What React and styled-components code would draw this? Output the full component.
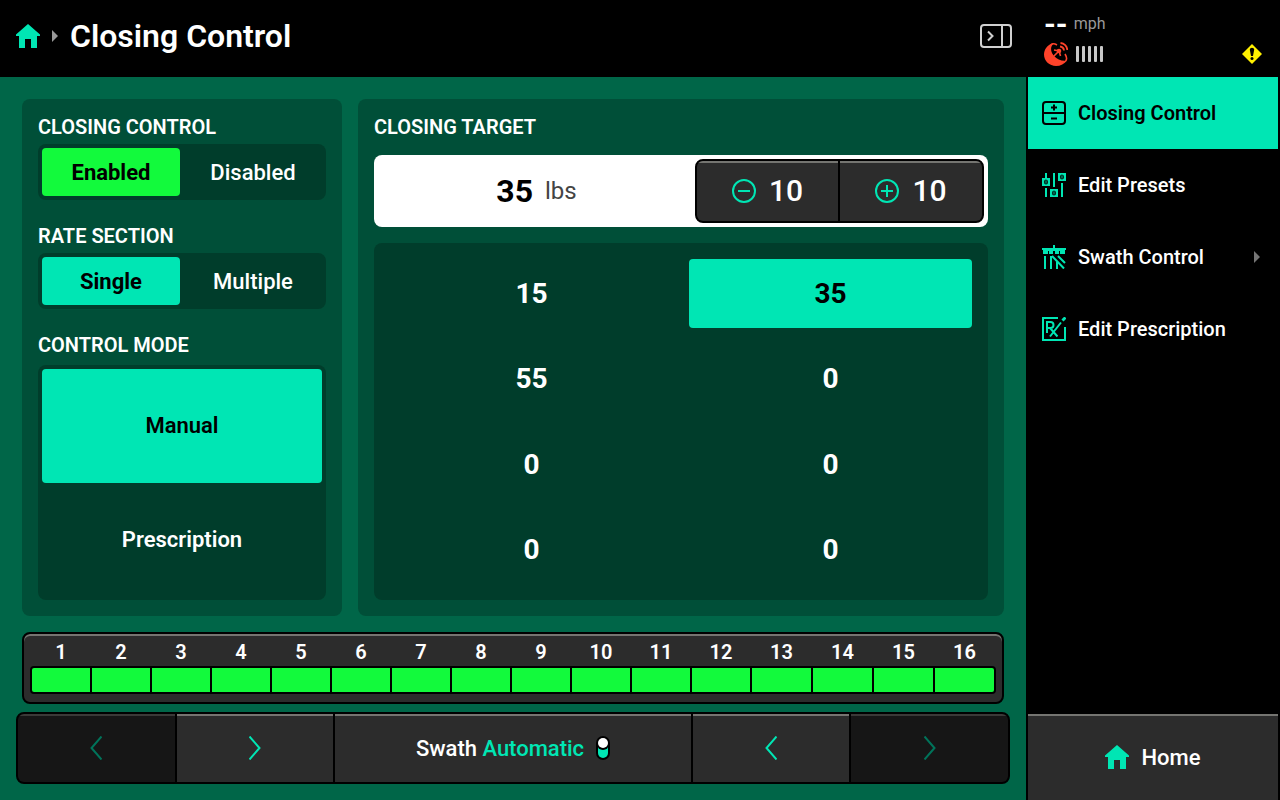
import { useState } from 'react'
import styled, { createGlobalStyle, css } from 'styled-components'

const teal = '#00e6b4'
const lime = '#12fa3c'
const edge = '#757571'

const sections = [58, 58, 58, 58, 58, 58, 58, 58, 58, 58, 58, 58, 59, 59, 59, 59]
const startPresets = [15, 35, 55, 0, 0, 0, 0, 0]

const HomeIcon = () => (
  <svg width='24' height='24' viewBox='0 0 24 24' fill={teal} aria-hidden='true'>
    <path d='M12 0L24 10.5V12H21V24H15V15H9V24H3V12H0V10.5Z' />
  </svg>
)

const Caret = ({ color }) => (
  <svg width='6' height='12' viewBox='0 0 6 12' fill={color} aria-hidden='true'>
    <path d='M0 0L6 6L0 12Z' />
  </svg>
)

const PanelIcon = () => (
  <svg width='32' height='24' viewBox='0 0 32 24' fill='none' stroke='#d0d0d0' strokeWidth='2' aria-hidden='true'>
    <rect x='1' y='1' width='30' height='22' rx='3' />
    <path d='M22 1V23M8 7.5L12.5 12L8 16.5' />
  </svg>
)

const DishIcon = () => (
  <svg width='24' height='24' viewBox='0 0 24 24' aria-hidden='true'>
    <path
      d='M9 1C3 3 0 7.5 0 12.5C0 19 5.5 24 12 24C16.500 24 20.500 22 23 18.500C18 19.500 13.500 17.500 10 14C7 10.500 6 6 8.500 2.800Z'
      fill='#ff432a'
    />
    <g fill='none' stroke='#ff432a'>
      <path d='M7.500 2.500C9 1.200 11 1.800 13 3M21 12C22.800 15 23.200 17.500 21.500 19' strokeWidth='1.600' />
      <path d='M9.500 14.500L15 9M10 8L15 9L16.500 14' strokeWidth='1.600' />
      <path d='M16 4.500A4.500 4.500 0 0 1 20 8.500M16.500 1A7.500 7.500 0 0 1 23.300 8' strokeWidth='1.800' />
    </g>
    <circle cx='15' cy='9' r='2.300' fill='#ff432a' />
  </svg>
)

const SignalIcon = () => (
  <svg width='28' height='16' viewBox='0 0 28 16' fill='#c8c8c8' aria-hidden='true'>
    {[0, 6, 12, 18, 24].map((x) => (
      <rect key={x} x={x} width='3' height='16' rx='1' />
    ))}
  </svg>
)

const WarningIcon = () => (
  <svg width='20' height='20' viewBox='0 0 20 20' role='img' aria-label='Warning'>
    <path d='M10 0L20 10L10 20L0 10Z' fill='#fff000' />
    <path d='M7.800 5.800A2.200 2 0 0 1 12.200 5.800L11 12H9Z' />
    <circle cx='10' cy='14.500' r='1.500' />
  </svg>
)

const RateIcon = () => (
  <svg width='24' height='24' viewBox='0 0 24 24' fill='none' stroke='#000' strokeWidth='2' aria-hidden='true'>
    <rect x='1' y='1' width='22' height='22' rx='3' />
    <path d='M1 12H23M9 6.500H15M12 3.500V9.500M9 17.500H15' />
  </svg>
)

const PresetsIcon = () => (
  <svg width='24' height='24' viewBox='0 0 24 24' aria-hidden='true'>
    <path
      d='M3 0H5V5H8V13H0V5H3ZM3 15H5V24H3ZM11 0H13V14H11ZM8 16H16V24H8ZM16 0H24V8H16ZM19 10H21V24H19Z'
      fill={teal}
    />
    <g fill='#00735a' stroke='#002c22' strokeWidth='1.200'>
      <ellipse cx='4' cy='9' rx='1.500' ry='2' />
      <ellipse cx='12' cy='20' rx='1.500' ry='2' />
      <ellipse cx='20' cy='4' rx='1.500' ry='2' />
    </g>
  </svg>
)

const SwathIcon = () => (
  <svg width='24' height='24' viewBox='0 0 24 24' aria-hidden='true'>
    <path d='M11 0H13V3H24V5H23V9H18V6H17V9H13V6H11V9H7V6H6V9H1V5H0V3H11Z' fill={teal} />
    <path d='M3 11V24M9 11V24M10 11L22 23.500M16 11L23 18M15 17V24' fill='none' stroke={teal} strokeWidth='2' />
  </svg>
)

const RxIcon = () => (
  <svg width='24' height='24' viewBox='0 0 24 24' fill='none' stroke={teal} strokeWidth='2' aria-hidden='true'>
    <path d='M16 1H1V23H23V10' />
    <path d='M5 16V5H8.500A3 3 0 0 1 8.500 11H5M8 11L15.500 19.500M19 5.500L8 19.500' />
    <path d='M20.500 3.500L23.500 0.500' strokeWidth='3' />
  </svg>
)

const StepIcon = ({ plus }) => (
  <svg width='24' height='24' viewBox='0 0 24 24' fill='none' stroke={teal} strokeWidth='2' aria-hidden='true'>
    <circle cx='12' cy='12' r='11' />
    <path d={plus ? 'M6 12H18M12 6V18' : 'M6 12H18'} />
  </svg>
)

const Chevron = ({ left }) => (
  <svg width='12' height='24' viewBox='0 0 12 24' fill='none' stroke={teal} strokeWidth='2' aria-hidden='true'>
    <path d={left ? 'M11.500 0.500L1.500 12L11.500 23.500' : 'M0.500 0.500L10.500 12L0.500 23.500'} />
  </svg>
)

const SwitchIcon = () => (
  <svg width='14' height='24' viewBox='0 0 14 24' aria-hidden='true'>
    <rect width='14' height='24' rx='7' />
    <rect x='2' y='8' width='10' height='14' rx='5' fill={teal} />
    <circle cx='7' cy='8' r='6' />
    <circle cx='7' cy='7' r='5' fill='#fff' />
  </svg>
)

const Toggle = ({ label, options, value, onChange, color }) => (
  <Field>
    <Label>{label}</Label>
    <Segments role='group' aria-label={label}>
      {options.map((option) => (
        <Option
          key={option}
          $active={option === value}
          $color={color}
          aria-pressed={option === value}
          onClick={() => onChange(option)}
        >
          {option}
        </Option>
      ))}
    </Segments>
  </Field>
)

const App = () => {
  const [enabled, setEnabled] = useState('Enabled')
  const [rate, setRate] = useState('Single')
  const [mode, setMode] = useState('Manual')
  const [target, setTarget] = useState(35)
  const [preset, setPreset] = useState(1)

  const pickPreset = (index) => {
    setPreset(index)
    setTarget(startPresets[index])
  }

  return (
    <>
      <GlobalStyle />
      <Page>
        <Screen>
          <Header>
            <IconLink href='#home' aria-label='Home'>
              <HomeIcon />
            </IconLink>
            <Caret color='#999' />
            <h1>Closing Control</h1>
            <IconButton aria-label='Collapse side panel'>
              <PanelIcon />
            </IconButton>
          </Header>
          <Content>
            <Panels>
              <Settings>
                <Toggle
                  label='CLOSING CONTROL'
                  options={['Enabled', 'Disabled']}
                  value={enabled}
                  onChange={setEnabled}
                  color={lime}
                />
                <Toggle
                  label='RATE SECTION'
                  options={['Single', 'Multiple']}
                  value={rate}
                  onChange={setRate}
                  color={teal}
                />
                <ModeField>
                  <Label>CONTROL MODE</Label>
                  <ModeList role='group' aria-label='Control mode'>
                    {['Manual', 'Prescription'].map((option) => (
                      <ModeOption
                        key={option}
                        $active={option === mode}
                        $color={teal}
                        aria-pressed={option === mode}
                        onClick={() => setMode(option)}
                      >
                        {option}
                      </ModeOption>
                    ))}
                  </ModeList>
                </ModeField>
              </Settings>
              <Target>
                <Label>CLOSING TARGET</Label>
                <TargetBar>
                  <Reading>
                    <strong>{target}</strong>
                    <span>lbs</span>
                  </Reading>
                  <Stepper>
                    <StepButton aria-label='Decrease by 10' onClick={() => setTarget(target - 10)}>
                      <StepIcon />
                      10
                    </StepButton>
                    <StepButton aria-label='Increase by 10' onClick={() => setTarget(target + 10)}>
                      <StepIcon plus />
                      10
                    </StepButton>
                  </Stepper>
                </TargetBar>
                <Presets>
                  {startPresets.map((value, index) => (
                    <Preset key={index} $active={index === preset} onClick={() => pickPreset(index)}>
                      {value}
                    </Preset>
                  ))}
                </Presets>
              </Target>
            </Panels>
            <SectionBar>
              <SectionNumbers>
                {sections.map((_, index) => (
                  <span key={index}>{index + 1}</span>
                ))}
              </SectionNumbers>
              <SectionStrip>
                {sections.map((_, index) => (
                  <Section key={index} />
                ))}
              </SectionStrip>
            </SectionBar>
            <SwathBar>
              <SwathButton disabled aria-label='Left end out'>
                <Chevron left />
              </SwathButton>
              <SwathButton aria-label='Left end in'>
                <Chevron />
              </SwathButton>
              <SwathButton>
                <span>
                  Swath <em>Automatic</em>
                </span>
                <SwitchIcon />
              </SwathButton>
              <SwathButton aria-label='Right end in'>
                <Chevron left />
              </SwathButton>
              <SwathButton disabled aria-label='Right end out'>
                <Chevron />
              </SwathButton>
            </SwathBar>
          </Content>
        </Screen>
        <Sidebar>
          <Status>
            <Speed>
              <strong>--</strong>
              <span>mph</span>
            </Speed>
            <Signal>
              <DishIcon />
              <SignalIcon />
              <WarningIcon />
            </Signal>
          </Status>
          <Menu>
            <MenuLink href='#closing-control' $active>
              <RateIcon />
              <span>Closing Control</span>
            </MenuLink>
            <MenuLink href='#edit-presets'>
              <PresetsIcon />
              <span>Edit Presets</span>
            </MenuLink>
            <MenuLink href='#swath-control'>
              <SwathIcon />
              <span>Swath Control</span>
              <Caret color='#757575' />
            </MenuLink>
            <MenuLink href='#edit-prescription'>
              <RxIcon />
              <span>Edit Prescription</span>
            </MenuLink>
          </Menu>
          <HomeLink href='#home'>
            <HomeIcon />
            Home
          </HomeLink>
        </Sidebar>
      </Page>
    </>
  )
}

const GlobalStyle = createGlobalStyle`
  * {
    box-sizing: border-box;
    margin: 0;
    padding: 0;
  }

  body {
    background: #000;
    color: #fff;
    font-family: Roboto, sans-serif;
  }

  button {
    border: none;
    background: none;
    color: inherit;
    font: inherit;
    cursor: pointer;
  }

  a {
    color: inherit;
    text-decoration: none;
  }

  svg {
    display: block;
    flex: none;
  }
`

const raised = css`
  background: #2c2c2c;
  box-shadow: inset 0 2px ${edge};
`

const Page = styled.div`
  display: grid;
  grid-template-columns: minmax(0, 1fr) 254px;
  min-height: 100vh;
`

const Screen = styled.main`
  display: flex;
  flex-direction: column;
`

const Header = styled.header`
  display: flex;
  align-items: center;
  gap: 12px;
  padding: 16px 14px 21px 16px;

  h1 {
    flex: 1;
    font-size: 32px;
    font-weight: 600;
    line-height: 40px;
  }
`

const IconLink = styled.a`
  display: block;
`

const IconButton = styled.button`
  display: block;
`

const Content = styled.div`
  flex: 1;
  display: flex;
  flex-direction: column;
  padding: 22px 16px 16px;
  background: #006648;
`

const Panels = styled.div`
  flex: 1;
  display: grid;
  grid-template-columns: 320px minmax(0, 1fr);
  gap: 16px;
  margin: 0 6px 16px;
`

const Panel = styled.section`
  display: flex;
  flex-direction: column;
  padding: 16px;
  border-radius: 8px;
  background: #004f38;
`

const Settings = styled(Panel)`
  gap: 24px;
`

const Target = styled(Panel)`
  gap: 16px;
`

const Field = styled.div`
  display: flex;
  flex-direction: column;
  gap: 5px;
`

const ModeField = styled(Field)`
  flex: 1;
  gap: 8px;
`

const Label = styled.h2`
  font-size: 20px;
  font-weight: 600;
  line-height: 24px;
`

const Segments = styled.div`
  display: grid;
  grid-template-columns: 1fr 1fr;
  gap: 4px;
  padding: 4px;
  border-radius: 8px;
  background: #003d2b;
`

const ModeList = styled(Segments)`
  flex: 1;
  grid-template-columns: 1fr;
  grid-auto-rows: 1fr;
  gap: 0;
`

const Option = styled.button`
  min-height: 48px;
  border-radius: 4px;
  font-size: 22px;
  font-weight: ${(props) => (props.$active ? 700 : 500)};
  color: ${(props) => (props.$active ? '#000' : '#fff')};
  background: ${(props) => (props.$active ? props.$color : 'none')};
`

const ModeOption = styled(Option)`
  font-weight: 600;
`

const TargetBar = styled.div`
  display: flex;
  padding: 4px;
  border-radius: 8px;
  background: #fff;
`

const Reading = styled.div`
  flex: 1;
  display: flex;
  align-items: center;
  justify-content: center;
  gap: 12px;
  color: #000;

  strong {
    font-size: 32px;
    font-weight: 700;
  }

  span {
    font-size: 24px;
    color: #444;
  }
`

const Stepper = styled.div`
  display: grid;
  grid-template-columns: 141px 142px;
  gap: 2px;
  border: 2px solid #000;
  border-radius: 8px;
  background: #000;
  overflow: hidden;
`

const StepButton = styled.button`
  ${raised}
  display: flex;
  align-items: center;
  justify-content: center;
  gap: 13px;
  height: 60px;
  font-size: 30px;
  font-weight: 500;
  line-height: 32px;
`

const Presets = styled.div`
  flex: 1;
  display: grid;
  grid-template-columns: 1fr 1fr;
  grid-auto-rows: 1fr;
  gap: 16px;
  padding: 16px;
  border-radius: 8px;
  background: #003d2b;
`

const Preset = styled.button`
  border-radius: 4px;
  font-size: 28px;
  font-weight: 700;
  color: ${(props) => (props.$active ? '#000' : '#fff')};
  background: ${(props) => (props.$active ? teal : 'none')};
`

const SectionBar = styled.div`
  ${raised}
  margin: 0 6px 8px;
  padding: 6px 6px 8px;
  border: 2px solid #000;
  border-radius: 8px;
`

const SectionGrid = styled.div`
  display: grid;
  grid-template-columns: ${sections.map((width) => `${width}fr`).join(' ')};
  gap: 2px;
`

const SectionNumbers = styled(SectionGrid)`
  padding: 0 2px 2px;
  font-size: 20px;
  font-weight: 600;
  line-height: 24px;
  text-align: center;
`

const SectionStrip = styled(SectionGrid)`
  border: 2px solid #000;
  border-radius: 4px;
  background: #000;
  overflow: hidden;
`

const Section = styled.div`
  height: 24px;
  background: ${lime};
`

const SwathBar = styled.div`
  display: grid;
  grid-template-columns: 11fr 11fr 25fr 11fr 11fr;
  gap: 2px;
  border: 2px solid #000;
  border-radius: 8px;
  background: #000;
  overflow: hidden;
`

const SwathButton = styled.button`
  ${raised}
  display: flex;
  align-items: center;
  justify-content: center;
  gap: 12px;
  height: 68px;
  font-size: 22px;
  font-weight: 500;

  em {
    font-style: normal;
    color: ${teal};
  }

  &:disabled {
    opacity: 0.5;
    cursor: default;
  }
`

const Sidebar = styled.aside`
  display: flex;
  flex-direction: column;
  padding: 0 2px;
`

const Status = styled.div`
  display: flex;
  flex-direction: column;
  gap: 6px;
  padding: 12px 16px 11px;
`

const Speed = styled.div`
  display: flex;
  align-items: center;
  gap: 6px;
  height: 24px;

  strong {
    font-size: 30px;
    font-weight: 700;
    line-height: 24px;
  }

  span {
    font-size: 16px;
    line-height: 22px;
    color: #999;
  }
`

const Signal = styled.div`
  display: flex;
  align-items: center;
  gap: 8px;

  svg:last-child {
    margin-left: auto;
  }
`

const Menu = styled.nav`
  flex: 1;
`

const MenuLink = styled.a`
  display: flex;
  align-items: center;
  gap: 12px;
  height: 72px;
  padding: 0 18px 0 14px;
  font-size: 20px;
  font-weight: ${(props) => (props.$active ? 600 : 500)};
  color: ${(props) => (props.$active ? '#000' : '#fff')};
  background: ${(props) => (props.$active ? teal : 'none')};

  span {
    flex: 1;
  }
`

const HomeLink = styled.a`
  ${raised}
  display: flex;
  align-items: center;
  justify-content: center;
  gap: 12px;
  height: 86px;
  font-size: 22px;
  font-weight: 500;
`

export default App
